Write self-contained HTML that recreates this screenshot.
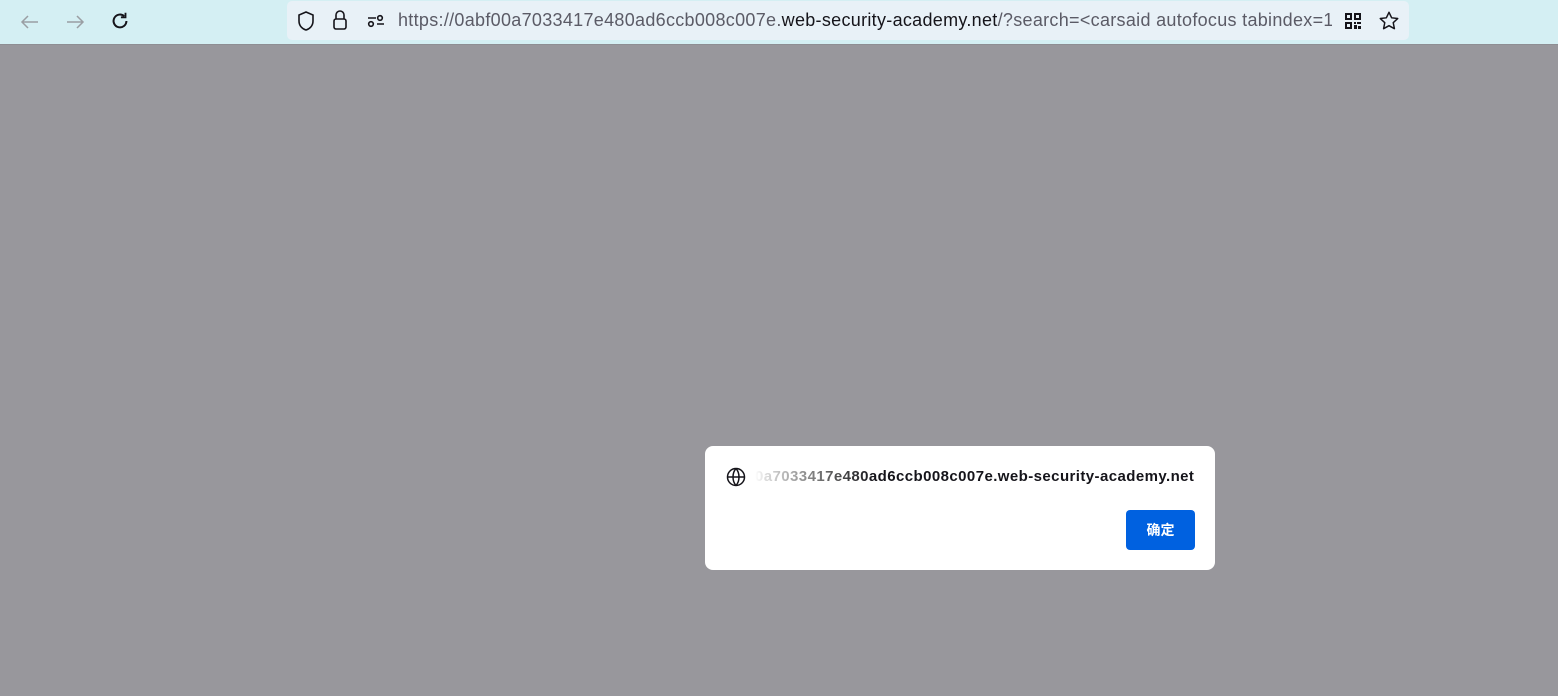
<!DOCTYPE html>
<html><head><meta charset="utf-8"><style>
body{margin:0;width:1558px;height:696px;background:#98979c;overflow:hidden;font-family:"Liberation Sans","Noto Sans CJK SC",sans-serif;position:relative}
#tb{position:absolute;left:0;top:0;width:1558px;height:44px;background:#d4eff3;border-bottom:1px solid #8e8e93}
#url{position:absolute;left:287px;top:1px;width:1122px;height:39px;background:#e8f1f7;border-radius:5px}
.t{position:absolute;top:9px;font-size:18px;color:#5b5b66;white-space:nowrap;letter-spacing:0.3px;width:934px;overflow:hidden}
svg{position:absolute}
#dlg{position:absolute;left:705px;top:446px;width:510px;height:124px;background:#fff;border-radius:8px}
#btn{position:absolute;left:421px;top:64px;width:69px;height:40px;background:#0061e0;border-radius:4px;color:#fff;font-weight:bold;font-size:14px;text-align:center;line-height:40px}
</style></head><body>
<div id="tb">
<svg style="left:18px;top:10px" width="24" height="24" viewBox="0 0 24 24" fill="none" stroke="#9a9ea3" stroke-width="1.5"><path d="M20 12H4M10 6l-6 6 6 6"/></svg>
<svg style="left:63px;top:10px" width="24" height="24" viewBox="0 0 24 24" fill="none" stroke="#9a9ea3" stroke-width="1.5"><path d="M4 12h16M14 6l6 6-6 6"/></svg>
<svg style="left:109px;top:10px" width="22" height="22" viewBox="0 0 24 24" fill="none" stroke="#15141a" stroke-width="2.2"><path d="M19 12a7 7 0 1 1-2.5-5.4"/><path d="M18 3v5h-5" stroke-width="2"/></svg>
<div id="url">
<svg style="left:9px;top:9px" width="20" height="22" viewBox="0 0 20 22" fill="none" stroke="#15141a" stroke-width="1.6"><path d="M10 2l7 3v6c0 5-3.5 8-7 9-3.5-1-7-4-7-9V5z"/></svg>
<svg style="left:44px;top:8px" width="18" height="22" viewBox="0 0 18 22" fill="none" stroke="#15141a" stroke-width="1.6"><rect x="3" y="10" width="12" height="10" rx="2"/><path d="M5 10V6a4 4 0 0 1 8 0v4"/></svg>
<svg style="left:79px;top:11px" width="20" height="18" viewBox="0 0 20 18" fill="none" stroke="#15141a" stroke-width="1.6"><path d="M2 6h8M11 12h7"/><circle cx="14" cy="6" r="2.3"/><circle cx="5" cy="12" r="2.3"/></svg>
<div class="t" style="left:111px">https://0abf00a7033417e480ad6ccb008c007e.<span style="color:#15141a">web-security-academy.net</span>/?search=&lt;carsaid autofocus tabindex=1</div>
<svg style="left:1057px;top:11px" width="18" height="18" viewBox="0 0 18 18" fill="#15141a"><path d="M1 1h7v7H1zM3 3v3h3V3zM10 1h7v7h-7zM12 3v3h3V3zM1 10h7v7H1zM3 12v3h3v-3zM10 10h2v2h-2zM13 10h4v2h-4zM10 13h3v4h-3zM14 14h3v3h-3z"/></svg>
<svg style="left:1091px;top:9px" width="22" height="22" viewBox="0 0 24 24" fill="none" stroke="#15141a" stroke-width="1.6" stroke-linejoin="round"><path d="M12 2.5l2.9 6 6.6.8-4.9 4.5 1.3 6.6L12 17.1l-5.9 3.3 1.3-6.6-4.9-4.5 6.6-.8z"/></svg>
</div>
</div>
<div id="dlg">
<svg style="left:21px;top:21px" width="20" height="20" viewBox="0 0 20 20" fill="none" stroke="#15141a" stroke-width="1.5"><circle cx="10" cy="10" r="8.5"/><path d="M1.5 10h17M10 1.5c-4 4.5-4 12.5 0 17M10 1.5c4 4.5 4 12.5 0 17"/></svg>
<div style="position:absolute;left:50px;top:22px;font-size:15px;font-weight:bold;letter-spacing:0.42px;color:#15141a;white-space:nowrap;background:linear-gradient(90deg,#fff 0,#ddd 10px,#555 80px,#15141a 120px);-webkit-background-clip:text;background-clip:text;-webkit-text-fill-color:transparent">0a7033417e480ad6ccb008c007e.web-security-academy.net</div>
<div id="btn">确定</div>
</div>
</body></html>
